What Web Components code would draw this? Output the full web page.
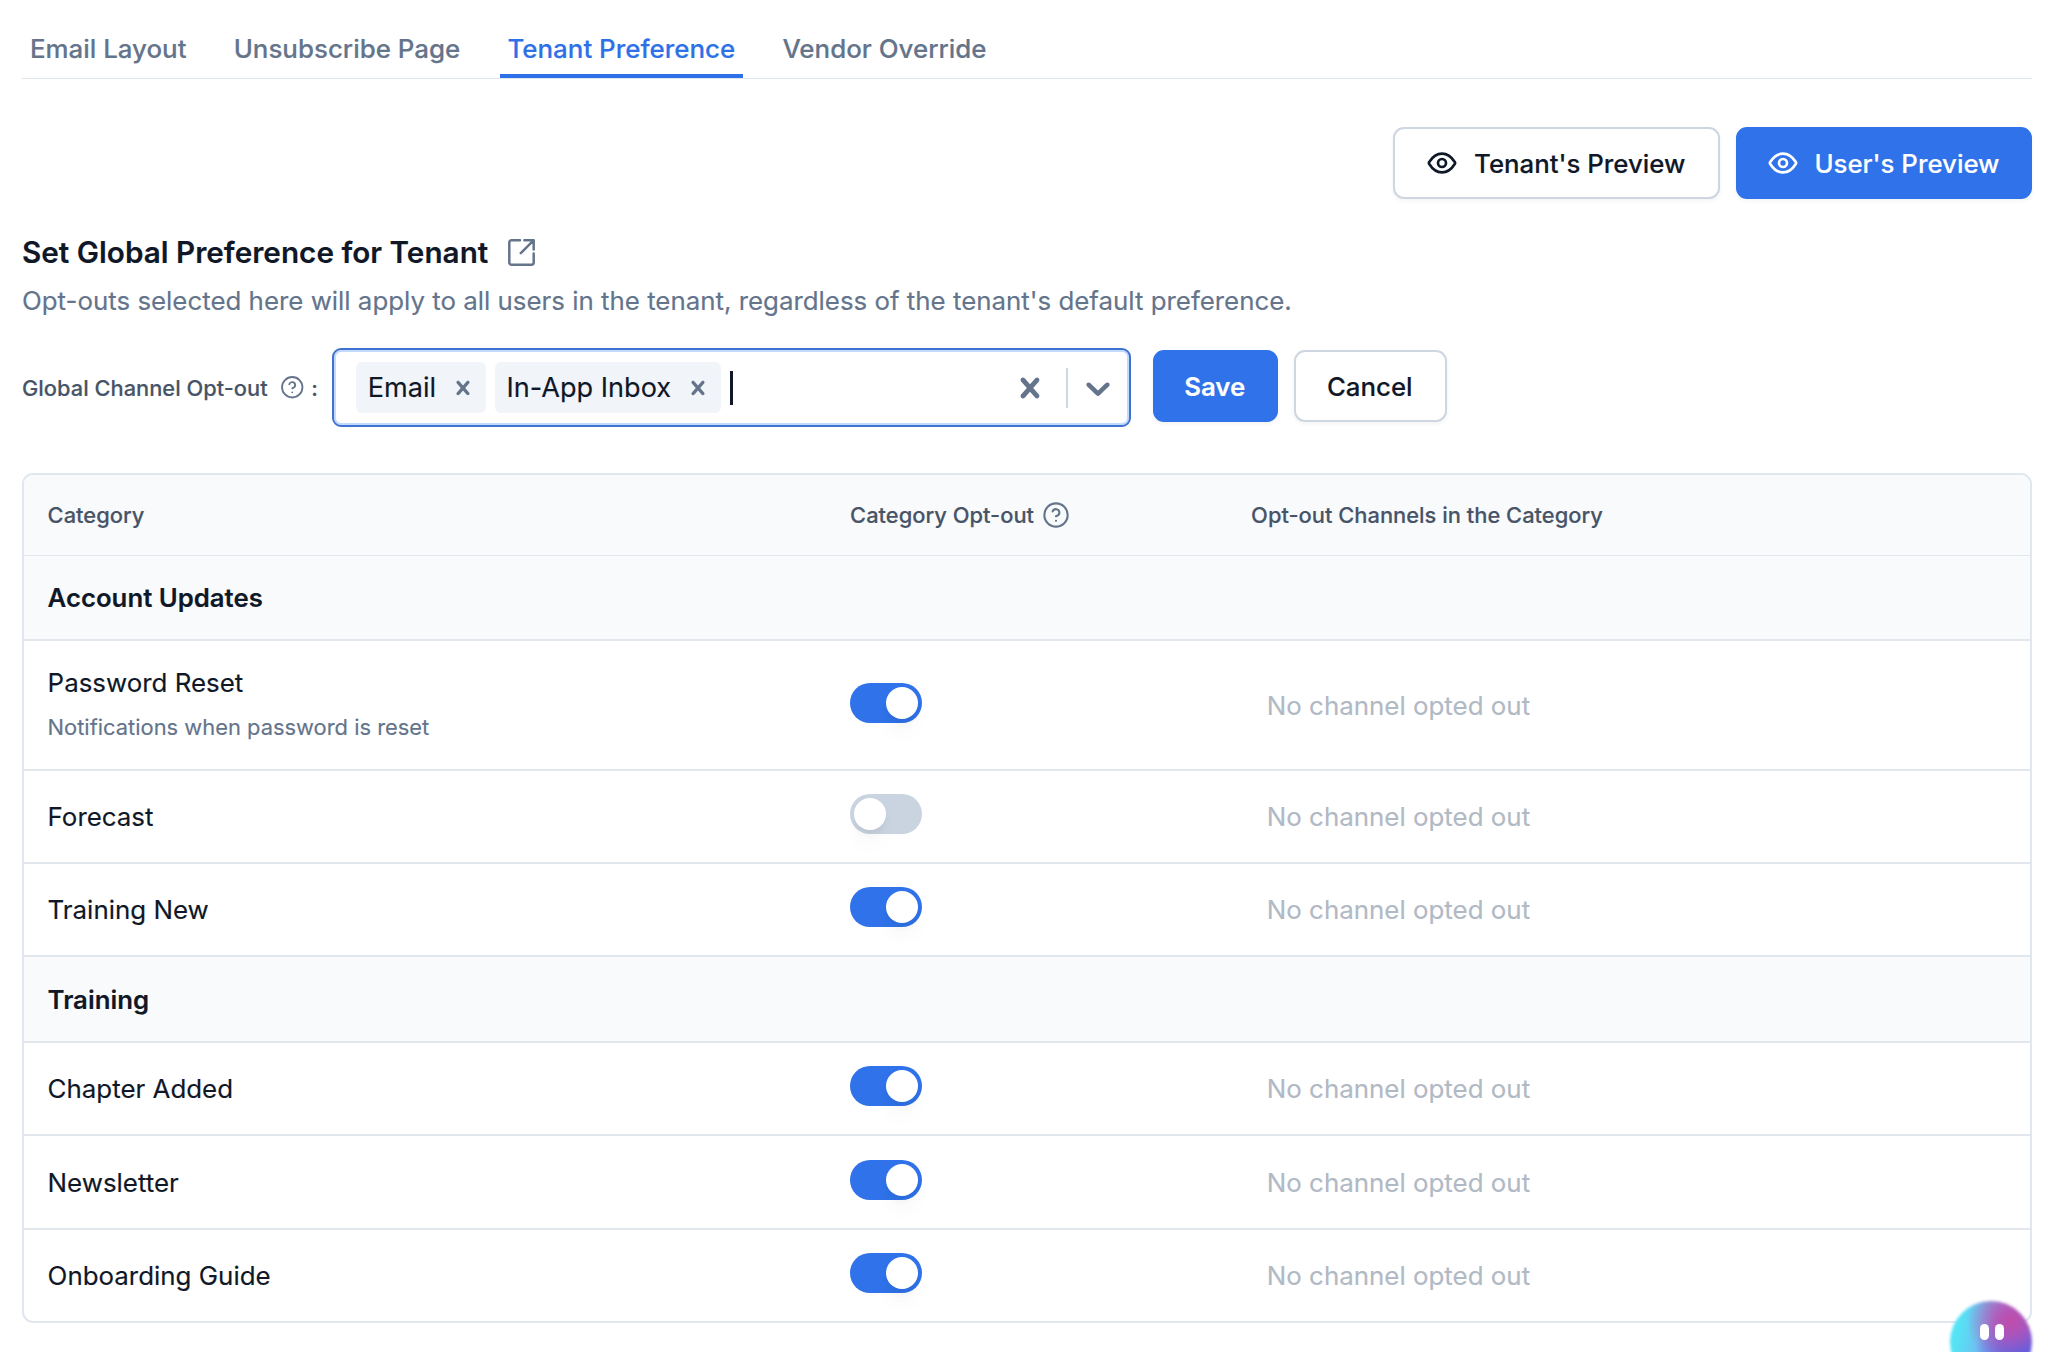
<!DOCTYPE html>
<html lang="en">
<head>
<meta charset="utf-8">
<title>Tenant Preference</title>
<style>
	html, body {
		margin: 0;
		height: 100%;
		overflow: hidden;
		background: #fff;
	}
	body {
		font-family: Inter, "Liberation Sans", sans-serif;
		font-size: 25.9px;
		color: #101828;
		-webkit-text-stroke: 0.15px;
	}
</style>
</head>
<body>
<preference-page>
	<tab-bar slot="tabs">
		<tab-item>Email Layout</tab-item>
		<tab-item>Unsubscribe Page</tab-item>
		<tab-item active>Tenant Preference</tab-item>
		<tab-item>Vendor Override</tab-item>
	</tab-bar>

	<action-button slot="actions" style="width: 326.5px; --gap: 16px"><ui-icon name="eye" size="32"></ui-icon>Tenant's Preview</action-button>
	<action-button slot="actions" primary style="width: 296px"><ui-icon name="eye" size="32"></ui-icon>User's Preview</action-button>

	<span slot="title">Set Global Preference for Tenant</span>
	<span slot="description">Opt-outs selected here will apply to all users in the tenant, regardless of the tenant's default preference.</span>

	<span slot="label">Global Channel Opt-out</span>
	<multi-select slot="control">
		<select-chip>Email</select-chip>
		<select-chip>In-App Inbox</select-chip>
	</multi-select>
	<action-button slot="control" primary style="width: 124.5px; font-weight: 600">Save</action-button>
	<action-button slot="control" style="width: 153.5px">Cancel</action-button>

	<preference-table slot="table">
		<category-group>Account Updates</category-group>
		<category-row on style="height: 130px">Password Reset<span slot="note">Notifications when password is reset</span></category-row>
		<category-row>Forecast</category-row>
		<category-row on>Training New</category-row>
		<category-group style="height: 86px">Training</category-group>
		<category-row on>Chapter Added</category-row>
		<category-row on style="height: 94px">Newsletter</category-row>
		<category-row on style="height: 91px; border-bottom: 0">Onboarding Guide</category-row>
	</preference-table>
</preference-page>
<chat-orb></chat-orb>

<script>
const line = (width, body) => `<g fill="none" stroke="currentColor" stroke-width="${width}" stroke-linecap="round" stroke-linejoin="round">${body}</g>`;

const ICONS = {
	eye: ['0 0 24 24', line(2, `
		<path d="M2.42 12.713C2.284 12.498 2.216 12.39 2.178 12.223C2.149 12.099 2.149 11.902 2.178 11.777C2.216 11.61 2.284 11.503 2.42 11.287C3.546 9.505 6.895 5 12 5C17.105 5 20.455 9.505 21.581 11.287C21.717 11.503 21.785 11.61 21.823 11.777C21.852 11.902 21.852 12.099 21.823 12.223C21.785 12.39 21.717 12.498 21.581 12.713C20.455 14.495 17.105 19 12 19C6.895 19 3.546 14.495 2.42 12.713Z"/>
		<circle cx="12" cy="12" r="3"/>`)],
	help: ['0 0 24 24', line(1.8, `
		<circle cx="12" cy="12" r="10"/>
		<path d="M9.09 9a3 3 0 0 1 5.83 1c0 2-3 3-3 3M12 17h.01"/>`)],
	external: ['0 0 27 27', line(2.5, `
		<path d="M12 1.3H3.5a2.2 2.2 0 0 0-2.2 2.2v20a2.2 2.2 0 0 0 2.2 2.2h20a2.2 2.2 0 0 0 2.2-2.2V14.6M16.4 1.3h9.3v9.3M25.3 1.7 12.8 14.2"/>`)],
	cross: ['0 0 20 20', '<path fill="currentColor" d="M14.348 14.849c-0.469 0.469-1.229 0.469-1.697 0l-2.651-3.030-2.651 3.029c-0.469 0.469-1.229 0.469-1.697 0-0.469-0.469-0.469-1.229 0-1.697l2.758-3.15-2.759-3.152c-0.469-0.469-0.469-1.228 0-1.697s1.228-0.469 1.697 0l2.652 3.031 2.651-3.031c0.469-0.469 1.228-0.469 1.697 0s0.469 1.229 0 1.697l-2.758 3.152 2.758 3.15c0.469 0.469 0.469 1.229 0 1.698z"/>'],
	chevron: ['0 0 20 20', '<path fill="currentColor" d="M4.516 7.548c0.436-0.446 1.043-0.481 1.576 0l3.908 3.747 3.908-3.747c0.533-0.481 1.141-0.446 1.574 0 0.436 0.445 0.408 1.197 0 1.615-0.406 0.418-4.695 4.502-4.695 4.502-0.217 0.223-0.502 0.335-0.787 0.335s-0.57-0.112-0.789-0.335c0 0-4.287-4.084-4.695-4.502s-0.436-1.17 0-1.615z"/>']
};

// Attach an open shadow root with the given styles and markup
function render(element, css, html) {
	element.attachShadow({ mode: 'open' }).innerHTML = `<style>:host { box-sizing: border-box; } ${css}</style>${html}`;
}

class UiIcon extends HTMLElement {
	constructor() {
		super();
		const [viewBox, body] = ICONS[this.getAttribute('name')];
		const size = this.getAttribute('size');
		render(this, `
			:host { display: block; flex: none; }
			svg { display: block; }
		`, `<svg width="${size}" height="${size}" viewBox="${viewBox}">${body}</svg>`);
	}
}

class TabBar extends HTMLElement {
	constructor() {
		super();
		render(this, `
			:host {
				display: flex;
				gap: 32.4px;
				height: 79px;
				padding-left: 0.5px;
				border-bottom: 1.5px solid #dfe5ed;
			}
		`, '<slot></slot>');
	}
}

class TabItem extends HTMLElement {
	constructor() {
		super();
		render(this, `
			:host {
				display: flex;
				align-items: center;
				height: 78px;
				padding: 22px 7.4px 0;
				border-bottom: 4px solid transparent;
				font-weight: 500;
				color: #64748b;
				white-space: nowrap;
			}
			:host([active]) {
				color: #2e70e8;
				border-color: #2e70e8;
			}
		`, '<slot></slot>');
	}
}

class ActionButton extends HTMLElement {
	constructor() {
		super();
		render(this, `
			:host {
				display: flex;
				flex: none;
				align-items: center;
				justify-content: center;
				gap: var(--gap, 15px);
				height: 72px;
				padding-right: 1px;
				border: 2px solid #cdd6e1;
				border-radius: 11px;
				background: #fff;
				box-shadow: 0 2px 4px rgba(16, 24, 40, 0.05);
				font-size: 25.8px;
				font-weight: 500;
				white-space: nowrap;
			}
			:host([primary]) {
				color: #fff;
				background: #2f72e9;
				border-color: #2f72e9;
			}
		`, '<slot></slot>');
	}
}

class SelectChip extends HTMLElement {
	constructor() {
		super();
		render(this, `
			:host {
				display: flex;
				align-items: center;
				height: 51px;
				padding: 0 8.8px 0 11.8px;
				border-radius: 6px;
				background: #f1f4f9;
				white-space: nowrap;
			}
			ui-icon { margin-left: 13.2px; color: #64748b; }
		`, '<slot></slot><ui-icon name="cross" size="28"></ui-icon>');
	}
}

class MultiSelect extends HTMLElement {
	constructor() {
		super();
		render(this, `
			:host {
				display: flex;
				align-items: center;
				width: 799px;
				height: 79px;
				margin-right: 6px;
				padding: 0 11.5px 0 22px;
				border: 2px solid #3f73cf;
				border-radius: 9px;
				box-shadow: inset 0 0 0 2px #c3daff;
				font-size: 27.1px;
			}
			.values { display: flex; flex: 1; align-items: center; gap: 8.5px; }
			.caret { width: 3.5px; height: 34px; background: #101828; }
			ui-icon { color: #64748b; }
			.separator { width: 2px; height: 40px; margin: 0 10px 0 16px; background: #cfd8e2; }
		`, `
			<div class="values"><slot></slot><span class="caret"></span></div>
			<ui-icon name="cross" size="40"></ui-icon>
			<span class="separator"></span>
			<ui-icon name="chevron" size="40"></ui-icon>
		`);
	}
}

class ToggleSwitch extends HTMLElement {
	constructor() {
		super();
		render(this, `
			:host {
				display: flex;
				width: 72px;
				height: 40px;
				padding: 4px;
				border-radius: 20px;
				background: #cad4e1;
			}
			:host([on]) { justify-content: flex-end; background: #2f72e9; }
			span {
				width: 32px;
				height: 32px;
				border-radius: 50%;
				background: #fff;
				box-shadow: 0 16px 20px -2px rgba(16, 24, 40, 0.03), 0 6px 8px -3px rgba(16, 24, 40, 0.07);
			}
		`, '<span></span>');
	}
}

class CategoryGroup extends HTMLElement {
	constructor() {
		super();
		render(this, `
			:host {
				display: flex;
				align-items: center;
				height: 85px;
				padding: 0 23.6px;
				border-bottom: 2px solid #e2e7ee;
				background: #f9fafc;
				font-size: 25.75px;
				font-weight: 560;
			}
		`, '<slot></slot>');
	}
}

class CategoryRow extends HTMLElement {
	constructor() {
		super();
		render(this, `
			:host {
				display: grid;
				grid-template-columns: 802.5px 401px 1fr;
				align-items: center;
				height: 93px;
				padding: 0 23.6px;
				border-bottom: 2px solid #e2e7ee;
			}
			.name { display: flex; flex-direction: column; line-height: 45px; }
			::slotted([slot="note"]) { font-size: 21.9px; color: #64748b; }
			toggle-switch { margin-bottom: 5px; }
			.channels { padding-left: 15.7px; color: #b1b9c5; }
		`, `
			<div class="name"><span><slot></slot></span><slot name="note"></slot></div>
			<toggle-switch ${this.hasAttribute('on') ? 'on' : ''}></toggle-switch>
			<div class="channels">No channel opted out</div>
		`);
	}
}

class PreferenceTable extends HTMLElement {
	constructor() {
		super();
		render(this, `
			:host {
				display: block;
				border: 2px solid #e0e7ee;
				border-radius: 11px;
				overflow: hidden;
			}
			header {
				display: grid;
				grid-template-columns: 802.5px 401px 1fr;
				align-items: center;
				height: 80px;
				padding: 0 23.6px;
				border-bottom: 1px solid #e2e7ee;
				background: #f9fafc;
				font-size: 21.9px;
				font-weight: 500;
				color: #475467;
			}
			.hinted { display: flex; align-items: center; gap: 8px; }
			ui-icon { color: #64748b; }
		`, `
			<header>
				<span>Category</span>
				<span class="hinted">Category Opt-out<ui-icon name="help" size="28"></ui-icon></span>
				<span>Opt-out Channels in the Category</span>
			</header>
			<slot></slot>
		`);
	}
}

class PreferencePage extends HTMLElement {
	constructor() {
		super();
		render(this, `
			:host { display: block; padding: 0 16px 0 22px; }
			.actions { display: flex; justify-content: flex-end; gap: 16.5px; margin-top: 48px; }
			h1 {
				display: flex;
				align-items: center;
				gap: 19.5px;
				margin: 32.5px 0 0;
				font-size: 29.7px;
				font-weight: 600;
				line-height: 40px;
			}
			h1 ui-icon { color: #64748b; margin-top: 2px; }
			.description { margin: 10px 0 0; font-size: 25.86px; line-height: 38px; color: #64748b; }
			.control { display: flex; align-items: center; gap: 16px; height: 79px; margin-top: 28.5px; }
			.label {
				display: flex;
				flex: none;
				align-items: center;
				width: 294px;
				font-size: 21.85px;
				font-weight: 500;
				color: #475467;
				white-space: nowrap;
			}
			.label ui-icon { margin: 0 7px 0 12px; color: #64748b; }
			::slotted(action-button[slot="control"]) { margin-bottom: 3px; }
			::slotted(preference-table) { margin-top: 46px; }
		`, `
			<slot name="tabs"></slot>
			<div class="actions"><slot name="actions"></slot></div>
			<h1><slot name="title"></slot><ui-icon name="external" size="27"></ui-icon></h1>
			<p class="description"><slot name="description"></slot></p>
			<div class="control">
				<span class="label"><slot name="label"></slot><ui-icon name="help" size="24.5"></ui-icon>:</span>
				<slot name="control"></slot>
			</div>
			<slot name="table"></slot>
		`);
	}
}

// Assistant launcher floating over the bottom right corner
class ChatOrb extends HTMLElement {
	constructor() {
		super();
		render(this, `
			:host {
				position: absolute;
				left: 1950px;
				top: 1301px;
				width: 82px;
				height: 82px;
			}
			.ball {
				position: absolute;
				inset: 0;
				border-radius: 50%;
				background:
					radial-gradient(circle at 74% 24%, #c04ba9 0, rgba(188, 78, 178, 0.8) 18%, rgba(160, 100, 205, 0) 50%),
					radial-gradient(circle at 92% 66%, #4560ea 0, rgba(74, 104, 234, 0.85) 24%, rgba(80, 120, 236, 0) 55%),
					linear-gradient(100deg, #55e3f5 14%, #70bff0 38%, #8590e4 64%, #6a78e6 100%);
				filter: blur(1.8px);
			}
			.eyes { position: absolute; left: 30px; top: 23px; display: flex; gap: 6.5px; }
			.eyes span { width: 8.5px; height: 16px; border-radius: 4.5px; background: #fff; }
		`, '<div class="ball"></div><div class="eyes"><span></span><span></span></div>');
	}
}

window.customElements.define('ui-icon', UiIcon);
window.customElements.define('tab-bar', TabBar);
window.customElements.define('tab-item', TabItem);
window.customElements.define('action-button', ActionButton);
window.customElements.define('select-chip', SelectChip);
window.customElements.define('multi-select', MultiSelect);
window.customElements.define('toggle-switch', ToggleSwitch);
window.customElements.define('category-group', CategoryGroup);
window.customElements.define('category-row', CategoryRow);
window.customElements.define('preference-table', PreferenceTable);
window.customElements.define('preference-page', PreferencePage);
window.customElements.define('chat-orb', ChatOrb);
</script>
</body>
</html>
